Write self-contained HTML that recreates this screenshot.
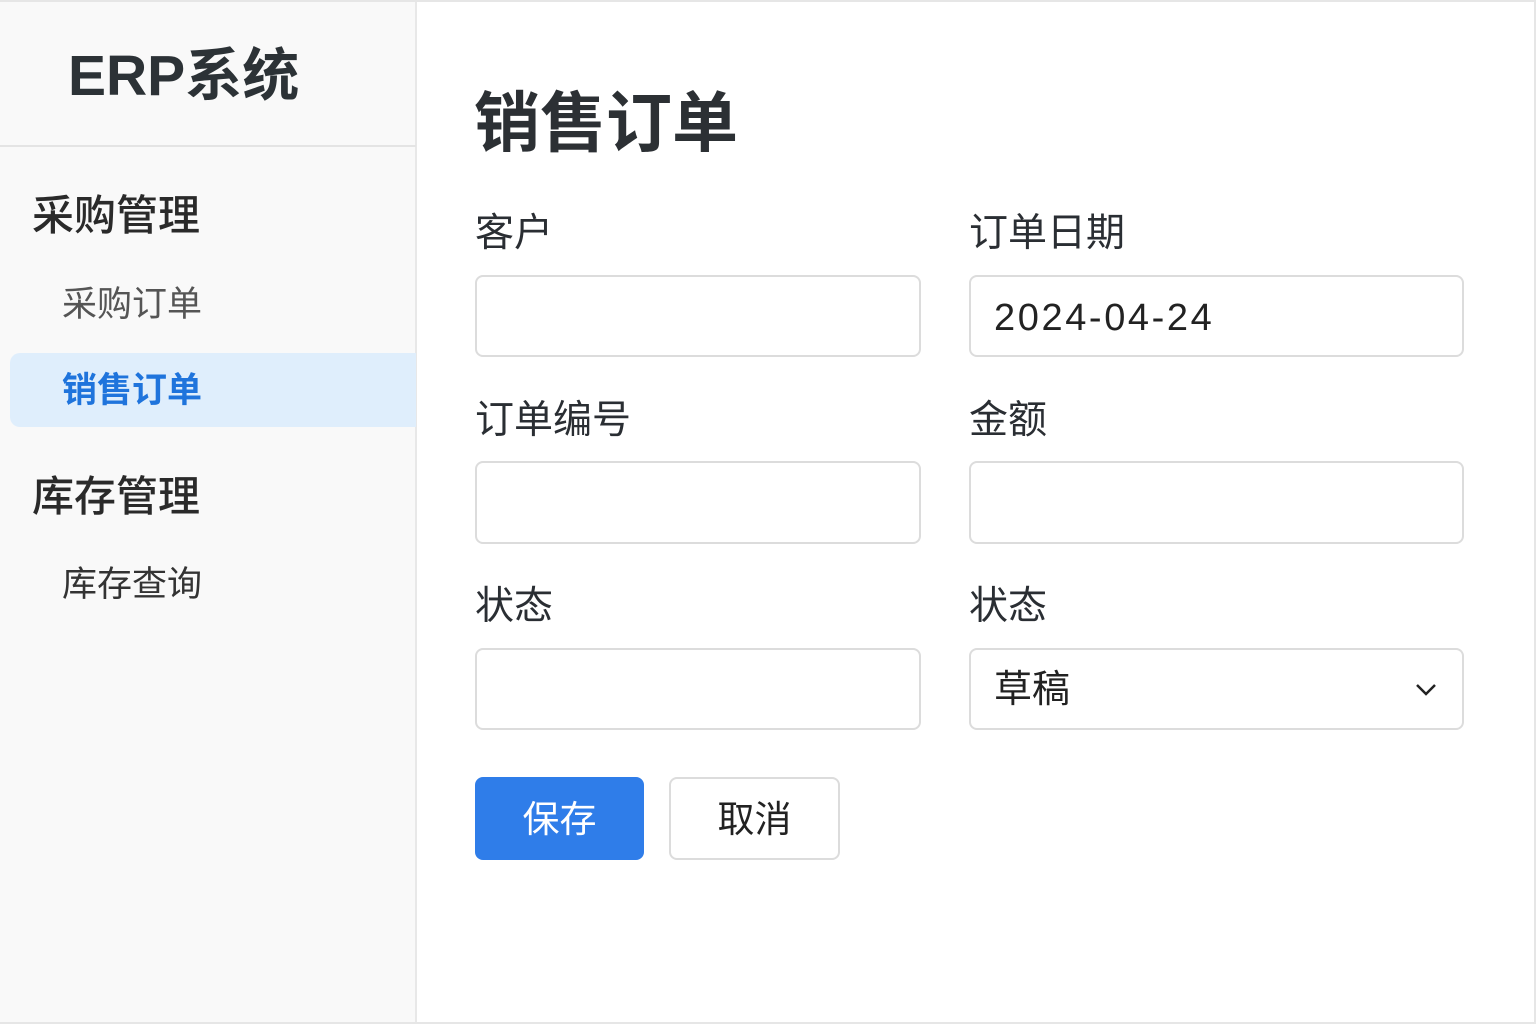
<!DOCTYPE html>
<html><head><meta charset="utf-8"><style>
*{margin:0;padding:0;box-sizing:border-box}
body{width:1536px;height:1024px;position:relative;background:#fff;font-family:"Liberation Sans","Noto Sans CJK SC",sans-serif;overflow:hidden;color:#2a2e33}
.frame{position:absolute;left:0;top:0;width:1536px;height:1024px;border:2px solid #e6e6e6;border-left:none;}
.side{position:absolute;left:0;top:0;width:417px;height:1024px;background:#f9f9f9;border-right:2px solid #e8e8e8}
.a{position:absolute;white-space:nowrap;line-height:1}
.inp{position:absolute;border:2px solid #dcdcdc;border-radius:8px;background:#fff}
</style></head><body>
<div class="side"></div>
<div class="frame"></div>
<div class="a" style="left:68px;top:48px;font-size:57px;font-weight:bold;color:#2c3236">ERP系统</div>
<div style="position:absolute;left:0;top:145px;width:416px;height:2px;background:#e4e4e4"></div>
<div class="a" style="left:32px;top:195px;font-size:42px;color:#2a2a2a;font-weight:500">采购管理</div>
<div class="a" style="left:62px;top:287px;font-size:35px;color:#555">采购订单</div>
<div style="position:absolute;left:10px;top:353px;width:406px;height:74px;background:#dfeefc;border-radius:10px 0 0 10px"></div>
<div class="a" style="left:62px;top:373px;font-size:35px;color:#1f74dc;font-weight:bold">销售订单</div>
<div class="a" style="left:32px;top:476px;font-size:42px;color:#2a2a2a;font-weight:500">库存管理</div>
<div class="a" style="left:62px;top:567px;font-size:35px;color:#333">库存查询</div>

<div class="a" style="left:474px;top:90px;font-size:66px;font-weight:bold;color:#2c3034">销售订单</div>
<div class="a" style="left:475px;top:214px;font-size:39px">客户</div>
<div class="a" style="left:969px;top:214px;font-size:39px">订单日期</div>
<div class="inp" style="left:475px;top:275px;width:446px;height:82px"></div>
<div class="inp" style="left:969px;top:275px;width:495px;height:82px"></div>
<div class="a" style="left:994px;top:299px;font-size:38px;color:#222;letter-spacing:2.6px">2024-04-24</div>
<div class="a" style="left:475px;top:401px;font-size:39px">订单编号</div>
<div class="a" style="left:969px;top:401px;font-size:39px">金额</div>
<div class="inp" style="left:475px;top:461px;width:446px;height:83px"></div>
<div class="inp" style="left:969px;top:461px;width:495px;height:83px"></div>
<div class="a" style="left:475px;top:587px;font-size:39px">状态</div>
<div class="a" style="left:969px;top:587px;font-size:39px">状态</div>
<div class="inp" style="left:475px;top:648px;width:446px;height:82px"></div>
<div class="inp" style="left:969px;top:648px;width:495px;height:82px"></div>
<div class="a" style="left:994px;top:671px;font-size:38px;color:#222">草稿</div>
<svg style="position:absolute;left:1415px;top:683px" width="22" height="14" viewBox="0 0 22 14"><path d="M2 2 L11 11 L20 2" fill="none" stroke="#222" stroke-width="2.5"/></svg>
<div style="position:absolute;left:475px;top:777px;width:169px;height:83px;background:#2f7de9;border-radius:8px;color:#fff;font-size:37px;text-align:center;line-height:85px">保存</div>
<div style="position:absolute;left:669px;top:777px;width:171px;height:83px;background:#fff;border:2px solid #dcdcdc;border-radius:8px;color:#222;font-size:37px;text-align:center;line-height:81px">取消</div>
</body></html>
